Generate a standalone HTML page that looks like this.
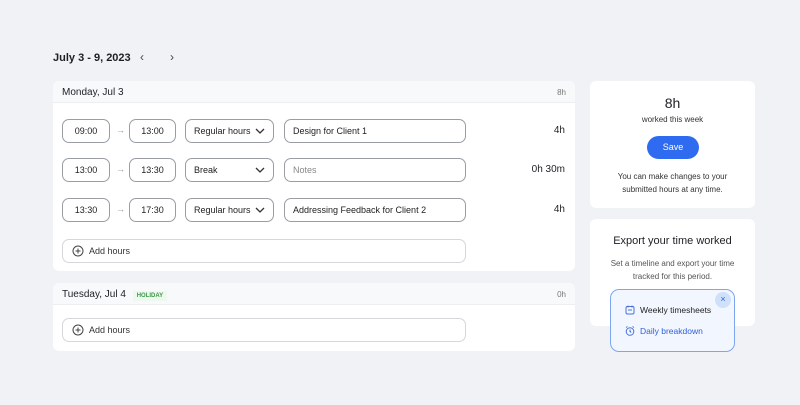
<!DOCTYPE html><html><head><style>
*{box-sizing:border-box;margin:0;padding:0}
body{width:800px;height:405px;background:#f1f2f6;font-family:"Liberation Sans",sans-serif;position:relative;overflow:hidden;color:#1d1f24}
.a{position:absolute}
.card{position:absolute;background:#fff;border-radius:6px;overflow:hidden}
.hd{position:absolute;left:0;right:0;top:0;height:22px;background:#f8f9fb;border-bottom:1px solid #eceef2;font-size:10px;padding:6px 9px}
.hd .r{position:absolute;right:9px;top:7px;font-size:8px;color:#777}
.in{position:absolute;height:24px;border:1px solid #9a9da4;border-radius:7px;font-size:9px;line-height:22px;color:#222}
.t{text-align:center}
.s{padding-left:8px}
.s svg{position:absolute;right:8px;top:7px}
.arr{position:absolute;font-size:9px;color:#999}
.amt{position:absolute;right:10px;font-size:10px}
.add{position:absolute;left:9px;width:404px;height:24px;border:1px solid #d5d7dc;border-radius:7px;font-size:9px;line-height:22px;padding-left:26px;color:#333}
.add svg{position:absolute;left:9px;top:5px}
</style></head><body>
<div class="a" style="left:53px;top:52px;font-size:11px;font-weight:bold">July 3 - 9, 2023</div>
<div class="a" style="left:140px;top:50px;font-size:12px;color:#444">&#8249;</div>
<div class="a" style="left:170px;top:50px;font-size:12px;color:#444">&#8250;</div>

<div class="card" style="left:53px;top:81px;width:522px;height:190px">
<div class="hd">Monday, Jul 3<span class="r">8h</span></div>
<div class="in t" style="left:9px;top:38px;width:48px">09:00</div><div class="arr" style="left:63px;top:44px">→</div>
<div class="in t" style="left:76px;top:38px;width:47px">13:00</div>
<div class="in s" style="left:132px;top:38px;width:89px">Regular hours<svg width="10" height="8"><path d="M1 2l4 4 4-4" stroke="#333" stroke-width="1.3" fill="none"/></svg></div>
<div class="in s" style="left:231px;top:38px;width:182px">Design for Client 1</div>
<div class="amt" style="top:44px">4h</div>

<div class="in t" style="left:9px;top:77px;width:48px">13:00</div><div class="arr" style="left:63px;top:83px">→</div>
<div class="in t" style="left:76px;top:77px;width:47px">13:30</div>
<div class="in s" style="left:132px;top:77px;width:89px">Break<svg width="10" height="8"><path d="M1 2l4 4 4-4" stroke="#333" stroke-width="1.3" fill="none"/></svg></div>
<div class="in s" style="left:231px;top:77px;width:182px;color:#888">Notes</div>
<div class="amt" style="top:83px">0h 30m</div>

<div class="in t" style="left:9px;top:117px;width:48px">13:30</div><div class="arr" style="left:63px;top:123px">→</div>
<div class="in t" style="left:76px;top:117px;width:47px">17:30</div>
<div class="in s" style="left:132px;top:117px;width:89px">Regular hours<svg width="10" height="8"><path d="M1 2l4 4 4-4" stroke="#333" stroke-width="1.3" fill="none"/></svg></div>
<div class="in s" style="left:231px;top:117px;width:182px">Addressing Feedback for Client 2</div>
<div class="amt" style="top:123px">4h</div>

<div class="add" style="top:158px"><svg width="12" height="12"><circle cx="6" cy="6" r="5" stroke="#444" fill="none"/><path d="M6 3.5v5M3.5 6h5" stroke="#444"/></svg>Add hours</div>
</div>

<div class="card" style="left:53px;top:283px;width:522px;height:68px">
<div class="hd">Tuesday, Jul 4 <span style="font-size:6px;color:#3a9a4a;background:#eef8ee;padding:2px 4px;margin-left:4px;font-weight:bold">HOLIDAY</span><span class="r">0h</span></div>
<div class="add" style="top:35px"><svg width="12" height="12"><circle cx="6" cy="6" r="5" stroke="#444" fill="none"/><path d="M6 3.5v5M3.5 6h5" stroke="#444"/></svg>Add hours</div>
</div>

<div class="card" style="left:590px;top:81px;width:165px;height:127px;text-align:center">
<div class="a" style="left:0;right:0;top:14px;font-size:14px">8h</div>
<div class="a" style="left:0;right:0;top:34px;font-size:8px;color:#333">worked this week</div>
<div class="a" style="left:57px;top:55px;width:52px;height:23px;background:#2f6bf0;border-radius:12px;color:#fff;font-size:9px;line-height:23px">Save</div>
<div class="a" style="left:0;right:0;top:89px;font-size:8px;line-height:13px;color:#333">You can make changes to your<br>submitted hours at any time.</div>
</div>

<div class="card" style="left:590px;top:219px;width:165px;height:107px;text-align:center">
<div class="a" style="left:0;right:0;top:16px;font-size:11px">Export your time worked</div>
<div class="a" style="left:0;right:0;top:38px;font-size:8px;line-height:13px;color:#555">Set a timeline and export your time<br>tracked for this period.</div>
</div>

<div class="a" style="left:610px;top:289px;width:125px;height:63px;background:#f2f7ff;border:1.5px solid #7ea6f0;border-radius:9px">
<div class="a" style="left:104px;top:2px;width:16px;height:16px;border-radius:50%;background:#cfe0fb;color:#3565d0;font-size:9px;text-align:center;line-height:15px">×</div>
<svg class="a" style="left:14px;top:15px" width="10" height="10"><rect x="1" y="1.5" width="8" height="7.5" rx="1.5" stroke="#4a70d8" fill="none"/><path d="M3 0.5v2M7 0.5v2M3 5h4" stroke="#4a70d8"/></svg>
<div class="a" style="left:29px;top:15px;font-size:8.5px;color:#222">Weekly timesheets</div>
<svg class="a" style="left:14px;top:36px" width="10" height="10"><circle cx="5" cy="5.5" r="3.8" stroke="#4a70d8" fill="none"/><path d="M5 3.5v2l1.2 1M1 1.5l1.5-1M9 1.5l-1.5-1" stroke="#4a70d8"/></svg>
<div class="a" style="left:29px;top:36px;font-size:8.5px;color:#2f5fd6">Daily breakdown</div>
</div>
</body></html>
